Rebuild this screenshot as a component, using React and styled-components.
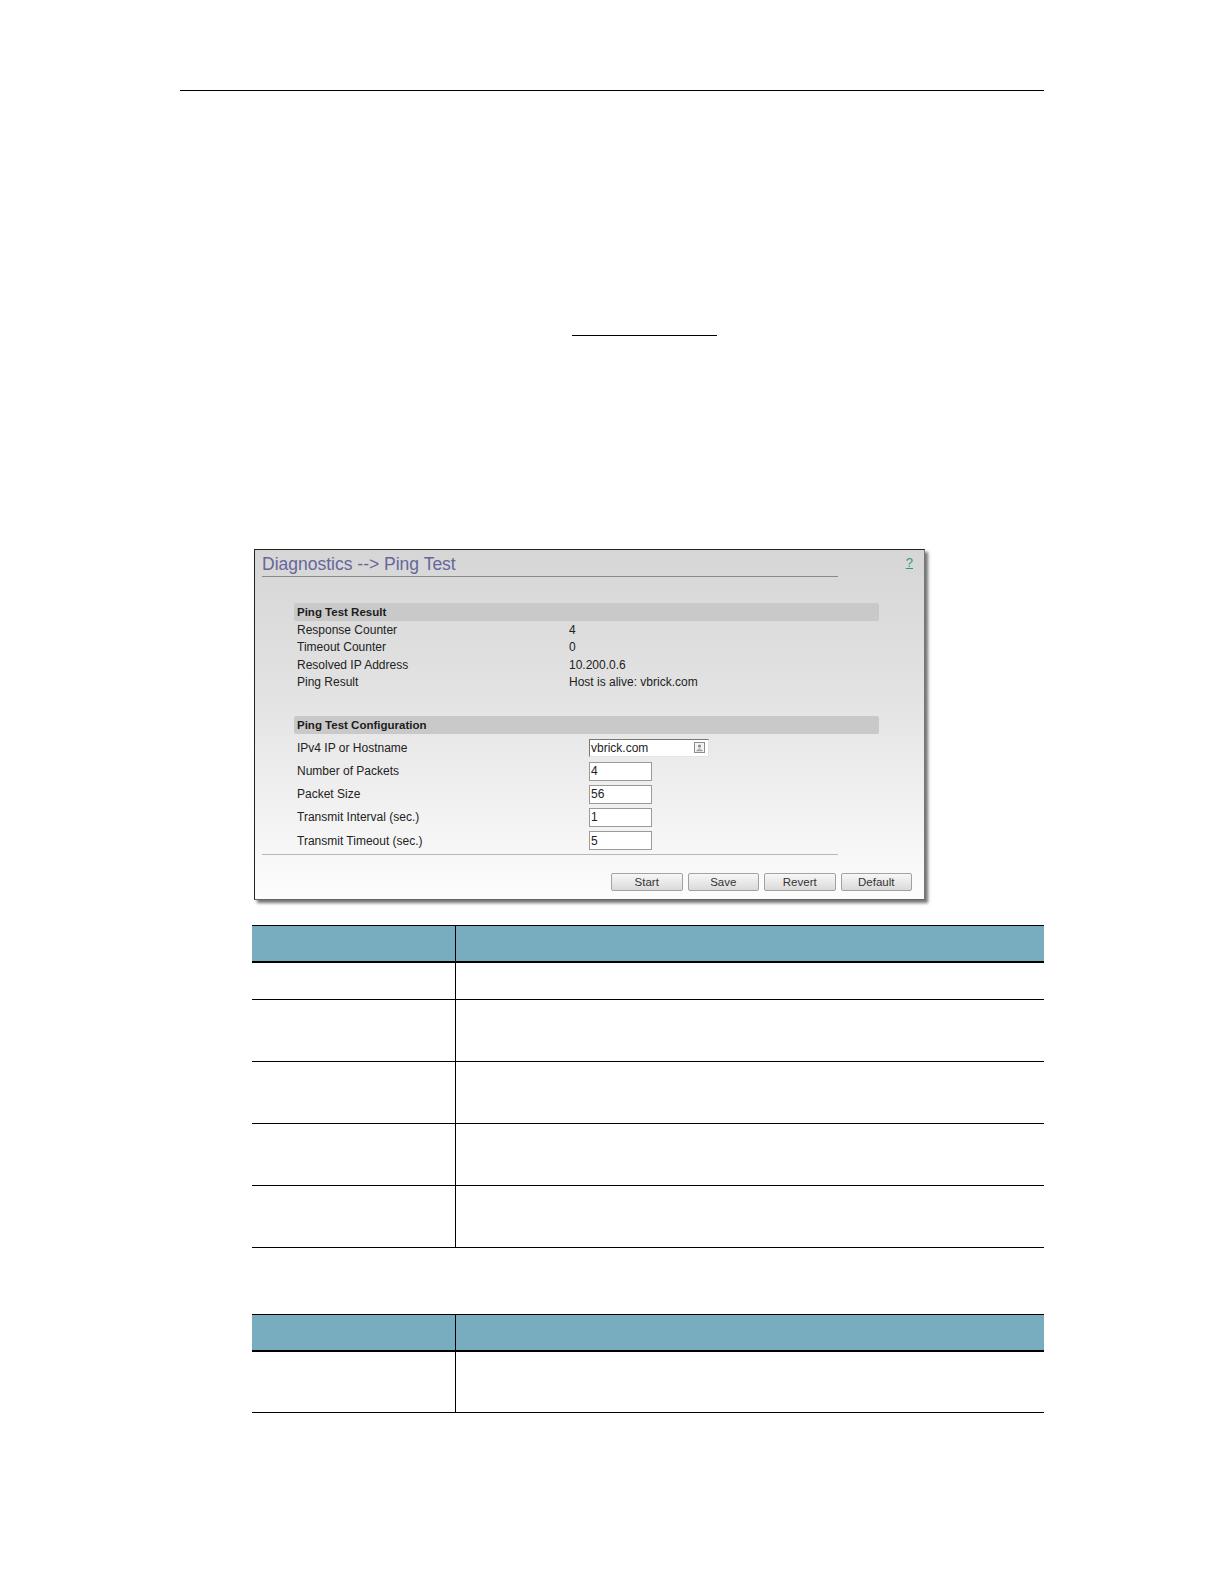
import React from 'react';
import styled, { createGlobalStyle } from 'styled-components';

const Global = createGlobalStyle`
  body {
    margin: 0;
    background: #ffffff;
    font-family: "Liberation Sans", Arial, sans-serif;
  }
`;

const Page = styled.div`
  width: 1224px;
  min-height: 1584px;
  padding-left: 180px;
  box-sizing: border-box;
`;

const Column = styled.div`
  width: 864px;
`;

const TopRule = styled.div`
  height: 90px;
  border-bottom: 1.5px solid #000;
`;

const LinkLine = styled.div`
  margin: 244px 0 0 392px;
  width: 145px;
  border-bottom: 1.5px solid #000;
`;

const Panel = styled.div`
  margin: 213px 0 0 74px;
  width: 671px;
  box-sizing: border-box;
  border: 1px solid #222;
  border-right-color: #777;
  border-bottom-color: #666;
  box-shadow: 3px 3px 3px rgba(0, 0, 0, 0.55);
  background: linear-gradient(180deg, #d6d6d6 0%, #e2e2e2 40%, #f4f4f4 80%, #fdfdfd 100%);
  padding-bottom: 8px;
`;

const TitleRow = styled.div`
  display: flex;
  justify-content: space-between;
  align-items: flex-start;
  padding: 3px 0 0 7px;
`;

const Title = styled.div`
  width: 576px;
  font-size: 17.5px;
  line-height: 23px;
  color: #66669a;
  border-bottom: 1px solid #8a8a8a;
`;

const Help = styled.a`
  margin: 2px 11px 0 0;
  font-size: 13px;
  color: #2f9a6c;
  text-decoration: underline;
`;

const Content = styled.div`
  margin-left: 39px;
  width: 585px;
  font-size: 12px;
  color: #222;
`;

const SectionHead = styled.div`
  margin-top: ${(p) => p.$top}px;
  height: 18.2px;
  line-height: 18px;
  padding-left: 3px;
  background: #c9c9c9;
  border-radius: 2px;
  font-size: 11.5px;
  font-weight: bold;
  color: #1c1c1c;
`;

const ResultList = styled.div`
  margin-top: 1.5px;
`;

const ResultRow = styled.div`
  display: grid;
  grid-template-columns: 272px 1fr;
  height: 17.2px;
  line-height: 17.2px;
  padding-left: 3px;
`;

const ConfigList = styled.div`
  margin-top: 2.5px;
`;

const ConfigRow = styled.div`
  display: grid;
  grid-template-columns: 292px 1fr;
  align-items: center;
  height: 23.2px;
  padding-left: 3px;
`;

const Field = styled.div`
  display: flex;
  align-items: center;
  justify-content: space-between;
  width: ${(p) => p.$w}px;
  height: 19.2px;
  box-sizing: border-box;
  background: #fff;
  border: 1px solid #9a9a9a;
  padding: 0 3px 0 1px;
  font-size: 12px;
  color: #222;
  ${(p) => p.$host && 'border-color: #777 #e4e4e4 #e4e4e4 #777; height: 18px;'}
`;

const Divider = styled.div`
  margin: 1.5px 0 0 7px;
  width: 576px;
  border-top: 1px solid #b8b8b8;
`;

const Buttons = styled.div`
  display: flex;
  justify-content: flex-end;
  gap: 5px;
  margin-top: 18px;
  padding-right: 12px;
`;

const Button = styled.button`
  width: 71.5px;
  height: 18.2px;
  padding: 0;
  border: 1px solid #a2a2a2;
  border-radius: 2px;
  background: linear-gradient(180deg, #f7f7f7 0%, #e6e6e6 60%, #d9d9d9 100%);
  font-family: "Liberation Sans", Arial, sans-serif;
  font-size: 11.5px;
  color: #333;
`;

const Table = styled.div`
  margin: ${(p) => p.$top}px 0 0 71.6px;
  width: 792.4px;
  border-top: 1px solid #000;
`;

const Row = styled.div`
  display: grid;
  grid-template-columns: 203px 1fr;
  height: ${(p) => p.$h}px;
  box-sizing: border-box;
  border-bottom: ${(p) => (p.$head ? 2 : 1)}px solid #000;
  background: ${(p) => (p.$head ? '#78adc0' : '#fff')};
`;

const Cell = styled.div`
  & + & {
    border-left: 1px solid #000;
  }
`;

const ContactIcon = () => (
  <svg width="11" height="11" viewBox="0 0 11 11">
    <rect x="0.5" y="0.5" width="10" height="10" fill="#f4f4f4" stroke="#8c8c8c" />
    <circle cx="5.5" cy="4" r="1.6" fill="#8c8c8c" />
    <path d="M3 7.6 Q5.5 5.6 8 7.6 Z" fill="#8c8c8c" />
    <line x1="2.5" y1="8.7" x2="8.5" y2="8.7" stroke="#8c8c8c" />
  </svg>
);

const results = [
  ['Response Counter', '4'],
  ['Timeout Counter', '0'],
  ['Resolved IP Address', '10.200.0.6'],
  ['Ping Result', 'Host is alive: vbrick.com'],
];

const config = [
  ['IPv4 IP or Hostname', 'vbrick.com', 120, true],
  ['Number of Packets', '4', 63],
  ['Packet Size', '56', 63],
  ['Transmit Interval (sec.)', '1', 63],
  ['Transmit Timeout (sec.)', '5', 63],
];

const DocTable = ({ top, rows }) => (
  <Table $top={top}>
    <Row $head $h={36.3}>
      <Cell />
      <Cell />
    </Row>
    {rows.map((h, i) => (
      <Row key={i} $h={h}>
        <Cell />
        <Cell />
      </Row>
    ))}
  </Table>
);

export default function App() {
  return (
    <Page>
      <Global />
      <Column>
        <TopRule />
        <LinkLine />
        <Panel>
          <TitleRow>
            <Title>Diagnostics --&gt; Ping Test</Title>
            <Help>?</Help>
          </TitleRow>
          <Content>
            <SectionHead $top={25.5}>Ping Test Result</SectionHead>
            <ResultList>
              {results.map(([k, v]) => (
                <ResultRow key={k}>
                  <span>{k}</span>
                  <span>{v}</span>
                </ResultRow>
              ))}
            </ResultList>
            <SectionHead $top={24.7}>Ping Test Configuration</SectionHead>
            <ConfigList>
              {config.map(([k, v, w, host]) => (
                <ConfigRow key={k}>
                  <span>{k}</span>
                  <Field $w={w} $host={host}>
                    <span>{v}</span>
                    {host && <ContactIcon />}
                  </Field>
                </ConfigRow>
              ))}
            </ConfigList>
          </Content>
          <Divider />
          <Buttons>
            <Button>Start</Button>
            <Button>Save</Button>
            <Button>Revert</Button>
            <Button>Default</Button>
          </Buttons>
        </Panel>
        <DocTable top={25.3} rows={[37.5, 61.5, 62.8, 61.6, 61.6]} />
        <DocTable top={66.8} rows={[61.8]} />
      </Column>
    </Page>
  );
}
